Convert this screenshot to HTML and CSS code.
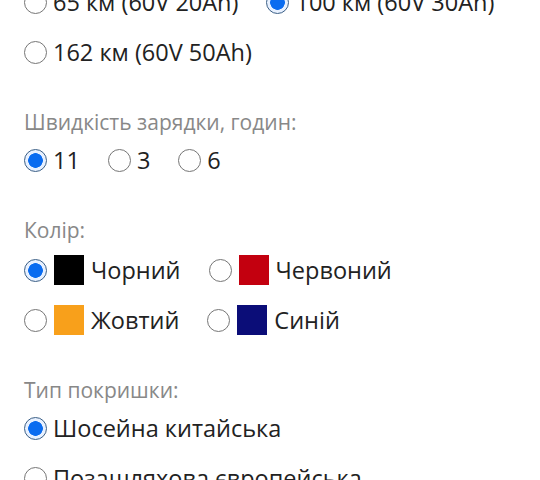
FILE: index.html
```html
<!DOCTYPE html>
<html lang="uk">
<head>
<meta charset="utf-8">
<link rel="stylesheet" href="styles.css">
</head>
<body>
<form class="form">
  <div class="options">
    <label class="opt"><input type="radio" name="range"><span class="txt">65 км (60V 20Ah)</span></label>
    <label class="opt"><input type="radio" name="range" checked><span class="txt">100 км (60V 30Ah)</span></label>
    <label class="opt"><input type="radio" name="range"><span class="txt">162 км (60V 50Ah)</span></label>
  </div>

  <div class="title">Швидкість зарядки, годин:</div>
  <div class="options">
    <label class="opt"><input type="radio" name="charge" checked><span class="txt">11</span></label>
    <label class="opt"><input type="radio" name="charge"><span class="txt">3</span></label>
    <label class="opt"><input type="radio" name="charge"><span class="txt">6</span></label>
  </div>

  <div class="title">Колір:</div>
  <div class="options colors">
    <label class="opt"><input type="radio" name="color" checked><span class="swatch black"></span><span class="txt">Чорний</span></label>
    <label class="opt"><input type="radio" name="color"><span class="swatch red"></span><span class="txt">Червоний</span></label>
    <label class="opt"><input type="radio" name="color"><span class="swatch yellow"></span><span class="txt">Жовтий</span></label>
    <label class="opt"><input type="radio" name="color"><span class="swatch blue"></span><span class="txt">Синій</span></label>
  </div>

  <div class="title">Тип покришки:</div>
  <div class="options column">
    <label class="opt"><input type="radio" name="tyre" checked><span class="txt">Шосейна китайська</span></label>
    <label class="opt"><input type="radio" name="tyre"><span class="txt">Позашляхова європейська</span></label>
  </div>
</form>
</body>
</html>
```

FILE: styles.css
```css
html, body {
  margin: 0;
  padding: 0;
  background: #fff;
}

body {
  font-family: "Open Sans", "Noto Sans", sans-serif;
  color: #222;
  overflow: hidden;
}

.form {
  padding-left: 24px;
  margin-top: -23px;
}

.options {
  display: flex;
  flex-wrap: wrap;
  column-gap: 28px;
  width: 510px;
}

.colors {
  width: 400px;
  padding-top: 2px;
}

.column {
  flex-direction: column;
}

.opt {
  display: flex;
  align-items: center;
  height: 50px;
  font-size: 23.5px;
}

.opt input {
  appearance: none;
  -webkit-appearance: none;
  box-sizing: border-box;
  width: 23px;
  height: 23px;
  margin: 0 6px 0 0;
  border: 1.5px solid #767676;
  border-radius: 50%;
  background: #fff;
  flex: none;
}

.opt input:checked {
  border: 1.5px solid #3b5f86;
  background: radial-gradient(circle, #0a6cf0 0 7px, #e8f1ff 7.6px);
}

.swatch {
  width: 30px;
  height: 30px;
  margin: 0 7px 0 1px;
  flex: none;
}

.black { background: #000; }
.red { background: #c3000f; }
.yellow { background: #f8a01b; }
.blue { background: #0b0d78; }

.title {
  font-size: 21px;
  line-height: 26px;
  color: #888;
  margin-top: 32px;
}
```
